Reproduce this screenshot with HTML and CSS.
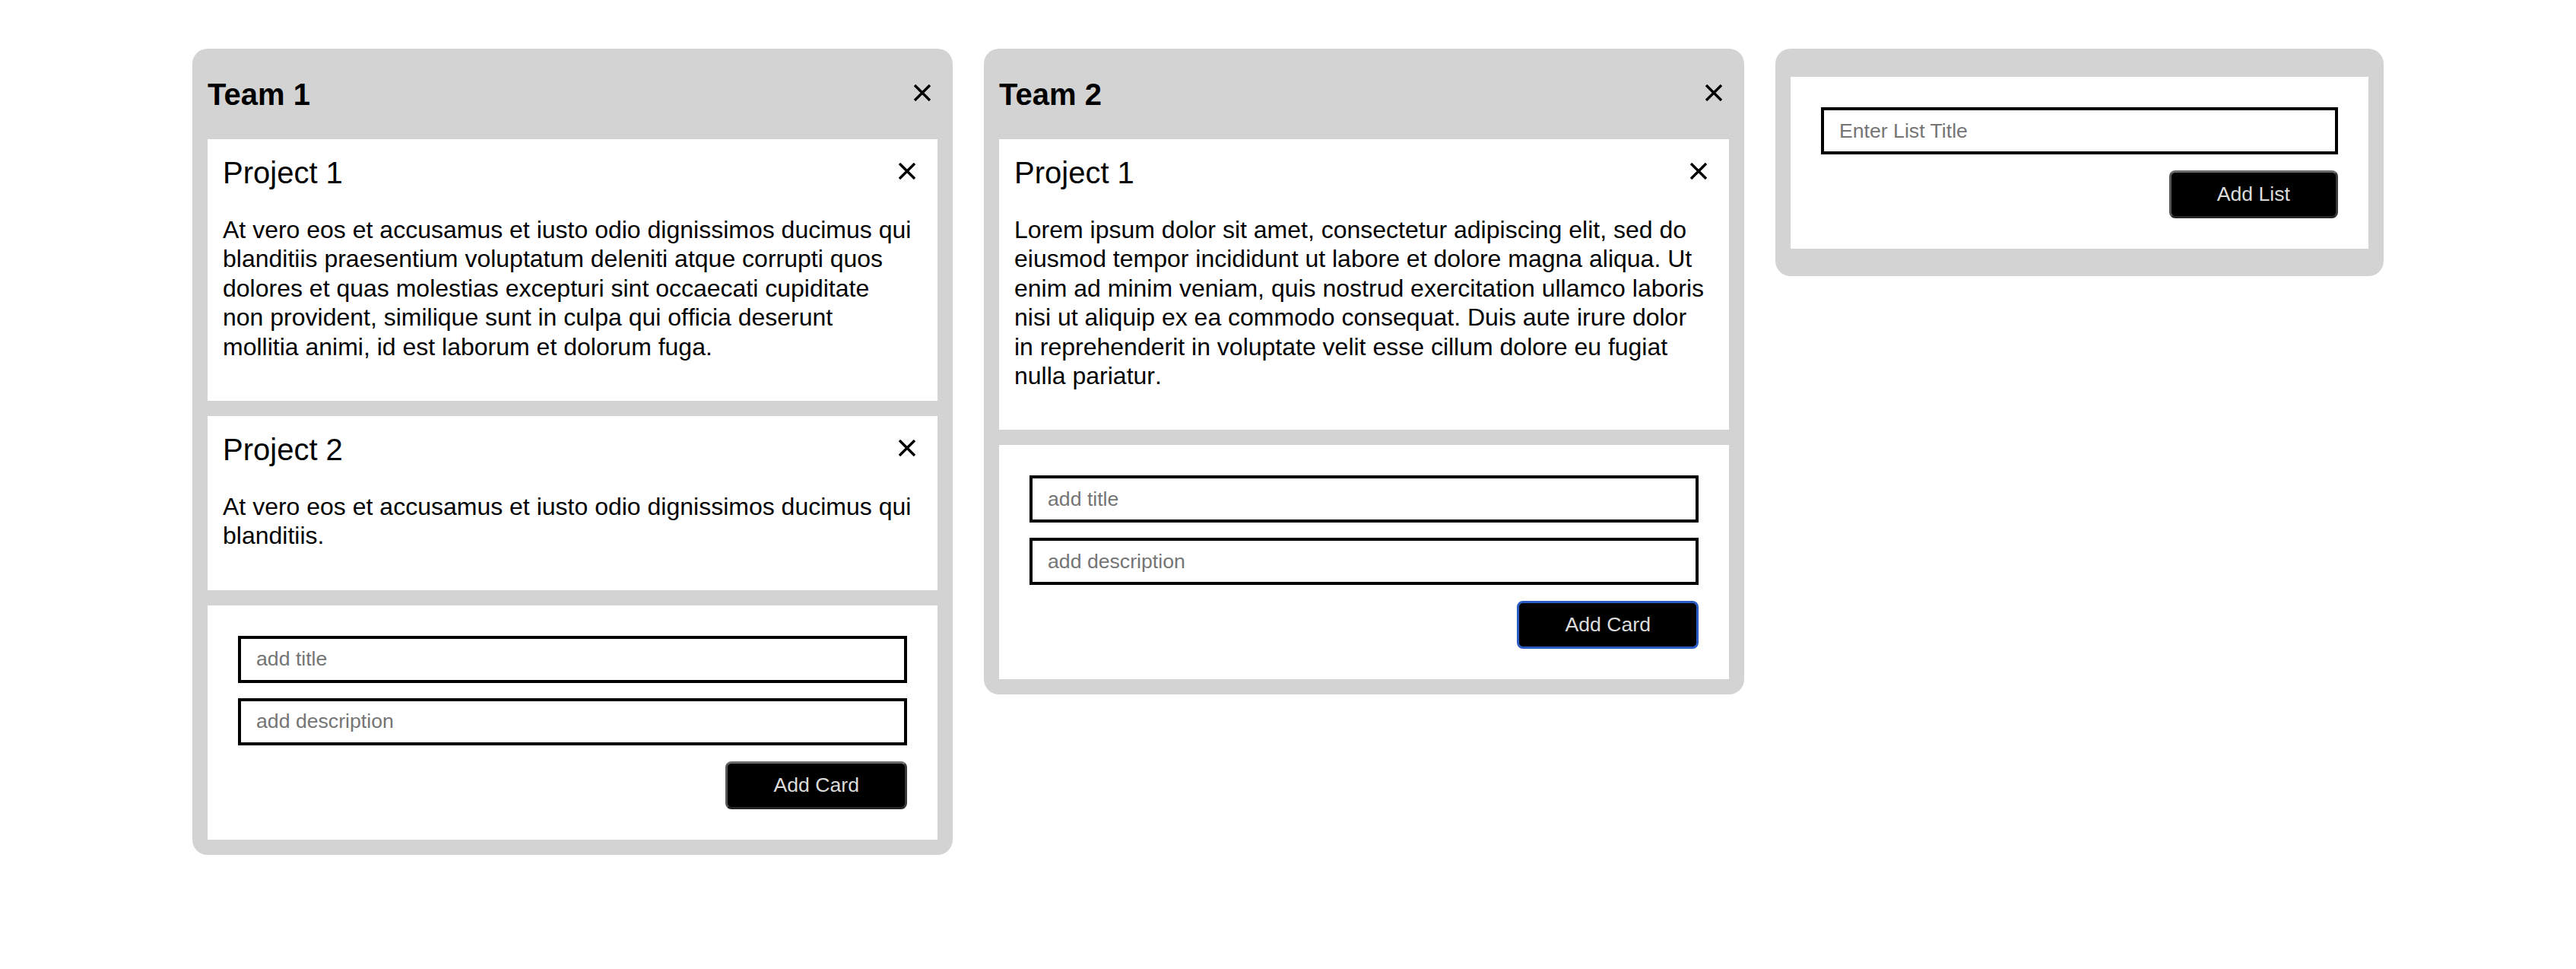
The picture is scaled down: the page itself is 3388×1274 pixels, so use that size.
FILE: index.html
```html
<!DOCTYPE html>
<html lang="en">
<head>
<meta charset="utf-8">
<title>Board</title>
<link rel="stylesheet" href="styles.css">
</head>
<body>
<main class="board">
  <section class="list list-wide">
    <header class="list-header">
      <h2 class="list-title">Team 1</h2>
      <button class="close" type="button" aria-label="Delete list">
        <svg viewBox="0 0 22 22" width="22" height="22"><path d="M1 1L21 21M21 1L1 21" stroke="#000" stroke-width="3.4" fill="none"/></svg>
      </button>
    </header>
    <div class="list-body">
      <article class="card">
        <div class="card-head">
          <h3 class="card-title">Project 1</h3>
          <button class="close" type="button" aria-label="Delete card">
            <svg viewBox="0 0 22 22" width="22" height="22"><path d="M1 1L21 21M21 1L1 21" stroke="#000" stroke-width="3.4" fill="none"/></svg>
          </button>
        </div>
        <p class="card-text">At vero eos et accusamus et iusto odio dignissimos ducimus qui blanditiis praesentium voluptatum deleniti atque corrupti quos dolores et quas molestias excepturi sint occaecati cupiditate non provident, similique sunt in culpa qui officia deserunt mollitia animi, id est laborum et dolorum fuga.</p>
      </article>
      <article class="card">
        <div class="card-head">
          <h3 class="card-title">Project 2</h3>
          <button class="close" type="button" aria-label="Delete card">
            <svg viewBox="0 0 22 22" width="22" height="22"><path d="M1 1L21 21M21 1L1 21" stroke="#000" stroke-width="3.4" fill="none"/></svg>
          </button>
        </div>
        <p class="card-text">At vero eos et accusamus et iusto odio dignissimos ducimus qui blanditiis.</p>
      </article>
      <form class="card form-card">
        <input class="field" type="text" placeholder="add title">
        <input class="field" type="text" placeholder="add description">
        <div class="actions"><button class="btn" type="button">Add Card</button></div>
      </form>
    </div>
  </section>

  <section class="list list-wide">
    <header class="list-header">
      <h2 class="list-title">Team 2</h2>
      <button class="close" type="button" aria-label="Delete list">
        <svg viewBox="0 0 22 22" width="22" height="22"><path d="M1 1L21 21M21 1L1 21" stroke="#000" stroke-width="3.4" fill="none"/></svg>
      </button>
    </header>
    <div class="list-body">
      <article class="card">
        <div class="card-head">
          <h3 class="card-title">Project 1</h3>
          <button class="close" type="button" aria-label="Delete card">
            <svg viewBox="0 0 22 22" width="22" height="22"><path d="M1 1L21 21M21 1L1 21" stroke="#000" stroke-width="3.4" fill="none"/></svg>
          </button>
        </div>
        <p class="card-text">Lorem ipsum dolor sit amet, consectetur adipiscing elit, sed do eiusmod tempor incididunt ut labore et dolore magna aliqua. Ut enim ad minim veniam, quis nostrud exercitation ullamco laboris nisi ut aliquip ex ea commodo consequat. Duis aute irure dolor in reprehenderit in voluptate velit esse cillum dolore eu fugiat nulla pariatur.</p>
      </article>
      <form class="card form-card">
        <input class="field" type="text" placeholder="add title">
        <input class="field" type="text" placeholder="add description">
        <div class="actions"><button class="btn btn-focus" type="button">Add Card</button></div>
      </form>
    </div>
  </section>

  <section class="list list-new">
    <form class="card form-card">
      <input class="field" type="text" placeholder="Enter List Title">
      <div class="actions"><button class="btn" type="button">Add List</button></div>
    </form>
  </section>
</main>
</body>
</html>
```
FILE: styles.css
```css
* {
  box-sizing: border-box;
}

html, body {
  margin: 0;
  padding: 0;
  background: #ffffff;
}

body {
  font-family: "Liberation Sans", Arial, Helvetica, sans-serif;
  color: #000;
}

.board {
  display: flex;
  justify-content: center;
  align-items: flex-start;
  gap: 41px;
  padding-top: 64px;
}

.list {
  background: #d3d3d3;
  border-radius: 20px;
  padding: 0 20px 20px;
}

.list-wide {
  width: 1000px;
}

.list-new {
  width: 800px;
  padding: 37px 20px 36px;
}

.list-header {
  height: 119px;
  display: flex;
  align-items: center;
  justify-content: space-between;
}

.list-title {
  margin: 0;
  font-size: 40px;
  font-weight: bold;
  line-height: 46px;
}

.close {
  width: 40px;
  height: 40px;
  padding: 0;
  margin: 0;
  border: 0;
  background: transparent;
  display: flex;
  align-items: center;
  justify-content: center;
  cursor: pointer;
}

.list-header .close {
  margin-top: -4px;
}

.close svg {
  display: block;
}

.list-body {
  display: flex;
  flex-direction: column;
  gap: 20px;
}

.card {
  background: #ffffff;
  padding: 20px;
}

.card-head {
  height: 48px;
  display: flex;
  align-items: center;
  justify-content: space-between;
}

.card-head .close {
  margin-top: -4px;
}

.card-title {
  margin: 0;
  font-size: 40px;
  font-weight: normal;
  line-height: 48px;
}

.card-text {
  margin: 32px 0;
  padding-right: 12px;
  font-size: 32px;
  line-height: 38.4px;
  font-kerning: none;
}

.form-card {
  padding: 40px;
  display: flex;
  flex-direction: column;
  gap: 20px;
}

.field {
  display: block;
  width: 100%;
  height: 62px;
  margin: 0;
  padding: 0 20px;
  border: 4px solid #000;
  border-radius: 0;
  background: #fff;
  font-family: "Liberation Sans", Arial, Helvetica, sans-serif;
  font-size: 26.67px;
  color: #000;
  outline: none;
}

.field::placeholder {
  color: #757575;
}

.actions {
  display: flex;
  justify-content: flex-end;
  margin-top: 1px;
}

.btn {
  height: 63px;
  padding: 0 60px;
  background: #000;
  color: #dcdcdc;
  font-family: "Liberation Sans", Arial, Helvetica, sans-serif;
  font-size: 26.67px;
  border-width: 3px;
  border-style: solid;
  border-color: #6a6a6a #3a3a3a #262626 #555555;
  border-radius: 8px;
  cursor: pointer;
}

.btn-focus {
  border-color: #2b5cc4;
}
```
